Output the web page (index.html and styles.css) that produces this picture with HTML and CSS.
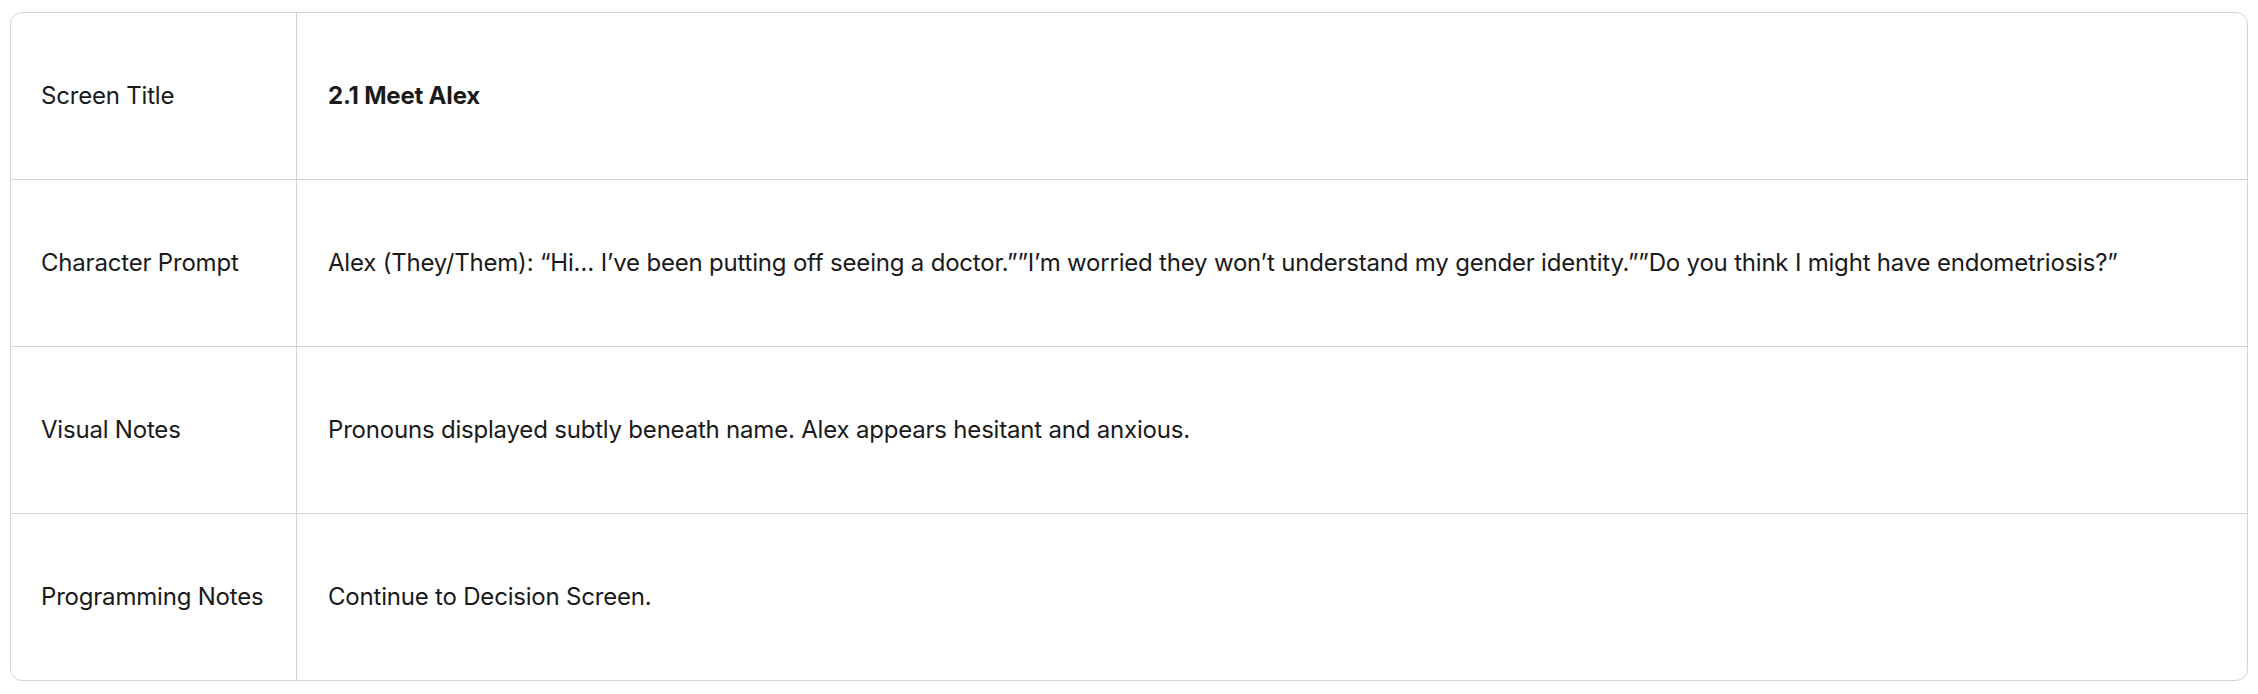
FILE: index.html
```html
<!DOCTYPE html>
<html lang="en">
<head>
<meta charset="utf-8">
<title>Screen spec</title>
<link rel="stylesheet" href="styles.css">
</head>
<body>
<div class="page">
  <div class="spec">
    <div class="row">
      <div class="label">Screen Title</div>
      <div class="value title">2.1 Meet Alex</div>
    </div>
    <div class="row">
      <div class="label">Character Prompt</div>
      <div class="value">Alex (They/Them): “Hi… I’ve been putting off seeing a doctor.””I’m worried they won’t understand my gender identity.””Do you think I might have endometriosis?”</div>
    </div>
    <div class="row">
      <div class="label">Visual Notes</div>
      <div class="value">Pronouns displayed subtly beneath name. Alex appears hesitant and anxious.</div>
    </div>
    <div class="row">
      <div class="label">Programming Notes</div>
      <div class="value">Continue to Decision Screen.</div>
    </div>
  </div>
</div>
</body>
</html>
```
FILE: styles.css
```css
html, body {
  margin: 0;
  padding: 0;
  background: #ffffff;
}
.page {
  padding: 12px 10px 13px 10px;
}
.spec {
  border: 1.5px solid #d4d4d4;
  border-radius: 12px;
  overflow: hidden;
  font-family: Inter, "Noto Sans", sans-serif;
  font-size: 24px;
  letter-spacing: -0.2px;
  line-height: 36px;
  color: #1a1a1a;
}
.row {
  display: grid;
  grid-template-columns: 286px 1fr;
  border-bottom: 1.5px solid #d4d4d4;
}
.row:last-child {
  border-bottom: none;
}
.label {
  padding: 65px 30px;
  border-right: 1.5px solid #d4d4d4;
  white-space: nowrap;
}
.value {
  padding: 65px 30px 65px 31px;
}
.title {
  font-weight: 700;
}
```
